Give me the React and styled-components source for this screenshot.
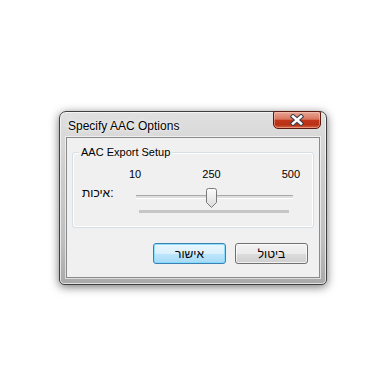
import React from "react";
import styled, {createGlobalStyle} from "styled-components";

const GlobalStyle = createGlobalStyle`
    body {
        margin: 0;
        background: #fff;
        font-family: "Liberation Sans", "DejaVu Sans", sans-serif;
        font-size: 12px;
        color: #000;
    }
`;

const Stage = styled.div`
    width: 368px;
    height: 376px;
    box-sizing: border-box;
    padding: 111px 0 0 59px;
`;

const Window = styled.div`
    width: 268px;
    height: 174px;
    box-sizing: border-box;
    display: flex;
    flex-direction: column;
    border: 1px solid #3f3f3f;
    border-radius: 7px 7px 5px 5px;
    background: linear-gradient(#e0e0e0 0%, #d0d0d0 30%, #bfbfbf 75%, #a9a9a9 100%);
    box-shadow: 0 2px 10px rgba(0, 0, 0, 0.55), inset 0 0 0 1px rgba(255, 255, 255, 0.65);
`;

const TitleBar = styled.div`
    height: 25px;
    display: flex;
    justify-content: space-between;
    align-items: flex-start;
    padding: 0 5px 0 8px;
`;

const Title = styled.span`
    line-height: 28px;
    text-shadow: 0 0 6px rgba(255, 255, 255, 0.95), 0 0 2px rgba(255, 255, 255, 0.9);
`;

const CloseButton = styled.div`
    width: 48px;
    height: 18px;
    margin-top: -1px;
    box-sizing: border-box;
    display: flex;
    align-items: center;
    justify-content: center;
    border: 1px solid #5a1a10;
    border-radius: 2px 2px 5px 5px;
    background: linear-gradient(#e9a696 0%, #d9765f 45%, #c3351a 52%, #b73116 80%, #da6440 100%);
    box-shadow: inset 0 0 0 1px rgba(255, 210, 200, 0.45);
`;

const Client = styled.div`
    flex: 1;
    margin: 0 6px 6px;
    border: 1px solid #8a8a8a;
    background: #f0f0f0;
    box-shadow: 0 0 0 1px rgba(255, 255, 255, 0.6);
    display: flex;
    flex-direction: column;
    font-size: 11px;
`;

const GroupBox = styled.fieldset`
    margin: 7px 5px 0;
    padding: 0;
    min-width: 0;
    border: 1px solid #d5dfe5;
    border-radius: 3px;
    box-shadow: inset 0 0 0 1px #fff;
`;

const GroupLegend = styled.legend`
    margin-left: 6px;
    padding: 0 2px;
    line-height: 14px;
    background: #f0f0f0;
`;

const GroupBody = styled.div`
    display: flex;
    align-items: flex-start;
    padding: 8px 0 14px;
`;

const FieldLabel = styled.span`
    width: 47px;
    margin: 19px 0 0 9px;
    line-height: 14px;
    font-size: 12px;
    white-space: nowrap;
`;

const SliderCol = styled.div`
    width: 172px;
    display: flex;
    flex-direction: column;
`;

const Scale = styled.div`
    display: flex;
    justify-content: space-between;
    line-height: 14px;
    padding-right: 1px;
`;

const TrackArea = styled.div`
    position: relative;
    height: 26px;
    padding-top: 14px;
    box-sizing: border-box;
`;

const Track = styled.div`
    margin: 0 8px 0 7px;
    height: 2px;
    border-top: 1px solid #a9a9a9;
    border-bottom: 1px solid #fff;
    background: #dedede;
`;

const Thumb = styled.svg`
    position: absolute;
    left: 77px;
    top: 7px;
`;

const RangeBar = styled.div`
    margin: 3px 12px 0 10px;
    height: 3px;
    background: #c6c6c6;
`;

const ButtonRow = styled.div`
    display: flex;
    justify-content: flex-end;
    gap: 9px;
    margin-top: 15px;
    padding-right: 11px;
`;

const Button = styled.div`
    width: 73px;
    height: 21px;
    box-sizing: border-box;
    display: flex;
    align-items: center;
    justify-content: center;
    font-size: 12px;
    border: 1px solid ${props => (props.primary ? "#3c7fb1" : "#707070")};
    border-radius: 3px;
    background: ${props => (props.primary
        ? "linear-gradient(#eaf6fd 0%, #d9f0fc 50%, #bee6fd 51%, #a7d9f5 100%)"
        : "linear-gradient(#f2f2f2 0%, #ebebeb 50%, #dddddd 51%, #cfcfcf 100%)")};
    box-shadow: inset 0 0 0 1px ${props => (props.primary ? "rgba(120, 220, 255, 0.8)" : "rgba(255, 255, 255, 0.7)")};
`;

const CloseIcon = () => (
    <svg width="14" height="12" viewBox="0 0 14 12">
        <path d="M3 2.5 L11 9.5 M11 2.5 L3 9.5" stroke="#3a3a46" strokeWidth="4.6" strokeLinecap="square"/>
        <path d="M3 2.5 L11 9.5 M11 2.5 L3 9.5" stroke="#fff" strokeWidth="2.6" strokeLinecap="square"/>
    </svg>
);

const App = () => {
    return (
        <Stage>
            <GlobalStyle/>
            <Window>
                <TitleBar>
                    <Title>Specify AAC Options</Title>
                    <CloseButton><CloseIcon/></CloseButton>
                </TitleBar>
                <Client>
                    <GroupBox>
                        <GroupLegend>AAC Export Setup</GroupLegend>
                        <GroupBody>
                            <FieldLabel>איכות:</FieldLabel>
                            <SliderCol>
                                <Scale>
                                    <span>10</span>
                                    <span>250</span>
                                    <span>500</span>
                                </Scale>
                                <TrackArea>
                                    <Track/>
                                    <Thumb width="11" height="20" viewBox="0 0 11 20">
                                        <defs>
                                            <linearGradient id="thumbFill" x1="0" y1="0" x2="0" y2="1">
                                                <stop offset="0" stopColor="#fdfdfd"/>
                                                <stop offset="1" stopColor="#dadada"/>
                                            </linearGradient>
                                        </defs>
                                        <path d="M2.5 .5 H8.5 Q10.5 .5 10.5 2.5 V14.5 L5.5 19.5 L.5 14.5 V2.5 Q.5 .5 2.5 .5 Z"
                                              fill="url(#thumbFill)" stroke="#7a7a7a"/>
                                    </Thumb>
                                </TrackArea>
                                <RangeBar/>
                            </SliderCol>
                        </GroupBody>
                    </GroupBox>
                    <ButtonRow>
                        <Button primary>אישור</Button>
                        <Button>ביטול</Button>
                    </ButtonRow>
                </Client>
            </Window>
        </Stage>
    );
};

export default App;
